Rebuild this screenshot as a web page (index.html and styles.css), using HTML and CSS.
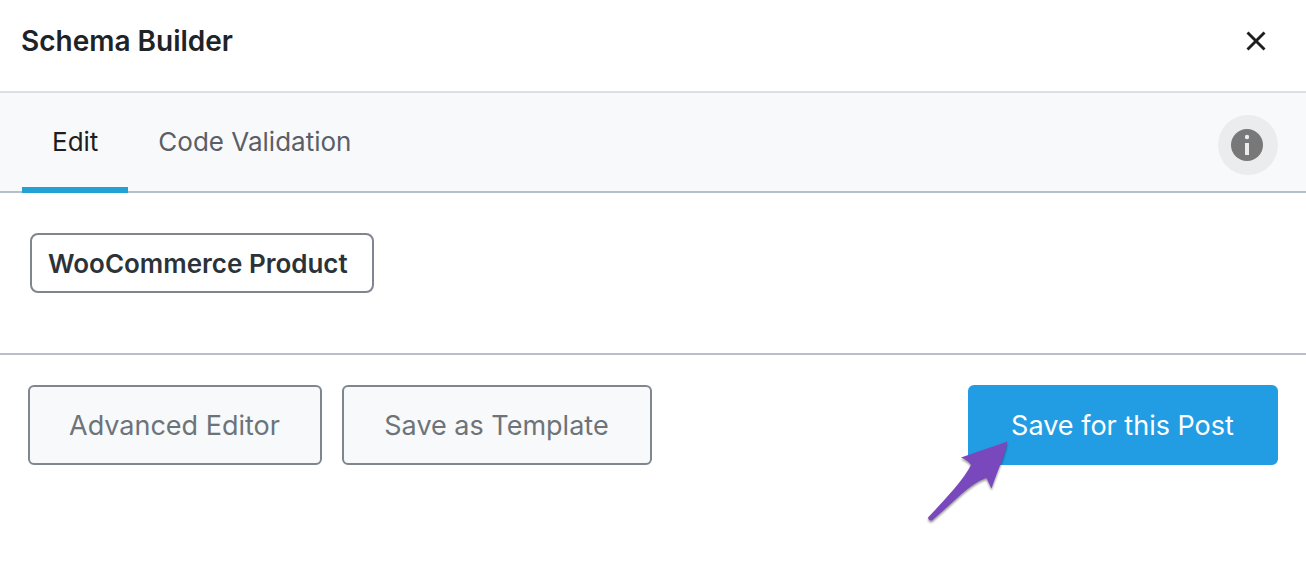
FILE: index.html
```html
<!DOCTYPE html>
<html lang="en">
<head>
<meta charset="utf-8">
<meta name="viewport" content="width=device-width, initial-scale=1">
<title>Schema Builder</title>
<link rel="stylesheet" href="styles.css">
</head>
<body>
<main class="modal">
  <header class="modal-header">
    <h1 class="modal-title">Schema Builder</h1>
    <button class="close" type="button" aria-label="Close">
      <svg width="20" height="20" viewBox="0 0 20 20" aria-hidden="true"><path d="M1.5 1.5 18.5 18.5M18.5 1.5 1.5 18.5" fill="none" stroke="#1e1e1e" stroke-width="2.9"/></svg>
    </button>
  </header>
  <nav class="tabs" role="tablist">
    <button class="tab tab-active" type="button" role="tab" aria-selected="true">Edit</button>
    <button class="tab" type="button" role="tab" aria-selected="false">Code Validation</button>
    <button class="info" type="button" aria-label="Information">
      <svg width="32" height="32" viewBox="0 0 32 32" aria-hidden="true"><circle cx="16" cy="16" r="16" fill="#787878"/><circle cx="16" cy="8" r="2.2" fill="#ebecee"/><path d="M14 14h4v12h-4z" fill="#ebecee"/></svg>
    </button>
  </nav>
  <section class="content">
    <button class="schema" type="button">WooCommerce Product</button>
  </section>
  <footer class="actions">
    <button class="btn" type="button">Advanced Editor</button>
    <button class="btn btn-wide" type="button">Save as Template</button>
    <div class="primary-wrap">
      <button class="btn btn-wide btn-primary" type="button">Save for this Post</button>
      <svg class="pointer" width="88" height="88" viewBox="0 0 88 88" aria-hidden="true"><path d="M83.500 4.500 37 20.500 Q44 23 47 28 Q42 38 30 52 Q17 67 4 80.500 Q4.500 84 8 83.500 Q20 73 32 62 Q50 45 62.500 41 L67.500 51.500 Q70 44 75 31 Q80 20 83.500 4.500Z" fill="#7a48bd"/></svg>
    </div>
  </footer>
</main>
</body>
</html>
```
FILE: styles.css
```css
* { box-sizing: border-box; }
body {
  margin: 0;
  background: #fff;
  color: #1d2327;
  font-family: Inter, "Liberation Sans", sans-serif;
}
button {
  margin: 0;
  padding: 0;
  border: 0;
  background: none;
  color: inherit;
  font: inherit;
  white-space: nowrap;
  cursor: pointer;
}
svg { display: block; }
.modal { min-height: 100vh; }
.modal-header {
  display: flex;
  align-items: center;
  justify-content: space-between;
  padding: 21px 40px 30px 21px;
  border-bottom: 2px solid #dcdfe3;
}
.modal-title {
  margin: 0;
  font-size: 28px;
  font-weight: 600;
  line-height: 40px;
}
.tabs {
  display: flex;
  align-items: stretch;
  padding: 0 28px 0 22px;
  background: #f8f9fb;
  box-shadow: inset 0 -2px #b5bfc9;
}
.tab {
  padding: 29px 30px 25px;
  border-bottom: 6px solid transparent;
  color: #5a5f66;
  font-size: 26px;
  line-height: 40px;
}
.tab-active {
  border-bottom-color: #24a1d3;
  color: #1e1e1e;
}
.info {
  display: flex;
  align-items: center;
  justify-content: center;
  align-self: center;
  width: 60px;
  height: 60px;
  margin: 4px 0 0 auto;
  padding-right: 2px;
  border-radius: 50%;
  background: #ebecee;
}
.content {
  padding: 40px 30px 60px;
  border-bottom: 2px solid #b5bfc9;
}
.schema {
  display: block;
  padding: 9px 24px 7px 16px;
  border: 2px solid #7f868d;
  border-radius: 8px;
  color: #2c3338;
  font-size: 26px;
  font-weight: 600;
  line-height: 40px;
}
.actions {
  display: flex;
  gap: 20px;
  padding: 30px 28px;
}
.btn {
  padding: 19px 40px 17px 39px;
  border: 2px solid #7f868d;
  border-radius: 6px;
  background: #f8f9fb;
  color: #6c7479;
  font-size: 27px;
  line-height: 40px;
}
.btn-wide { min-width: 310px; }
.primary-wrap {
  position: relative;
  margin-left: auto;
}
.btn-primary {
  border-color: #229de4;
  background: #229de4;
  color: #fff;
}
.pointer {
  position: absolute;
  top: 52px;
  left: -44px;
  filter: drop-shadow(0 2px 1px rgba(0, 0, 0, 0.4));
  pointer-events: none;
}
```
